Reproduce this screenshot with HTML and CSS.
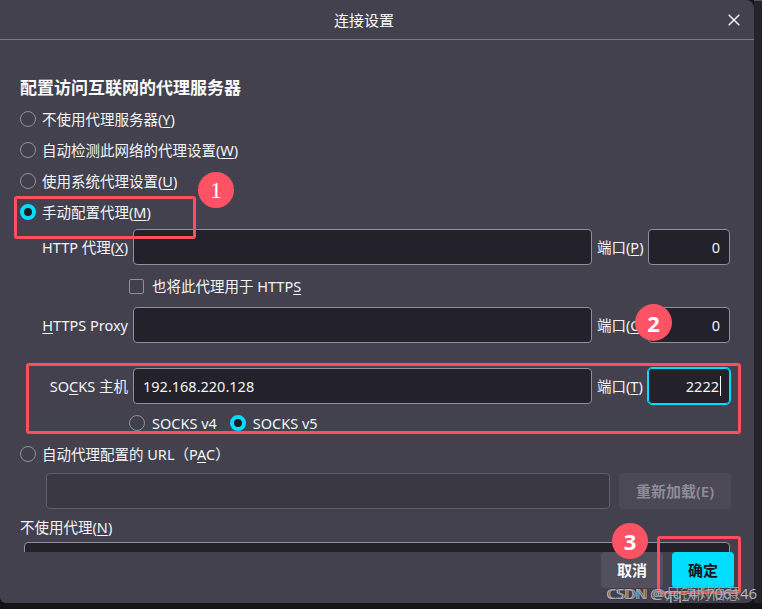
FILE: index.html
```html
<!DOCTYPE html>
<html lang="zh-CN">
<head>
<meta charset="utf-8">
<title>连接设置</title>
<link rel="stylesheet" href="styles.css">
</head>
<body>
<div class="screen">
  <div class="dialog">
    <div class="titlebar">
      <span class="title">连接设置</span>
      <svg class="close" width="12" height="12" viewBox="0 0 12 12"><path d="M0.7 0.7 L11.3 11.3 M11.3 0.7 L0.7 11.3" stroke="#fbfbfe" stroke-width="1.4" fill="none"/></svg>
    </div>
    <div class="content">
      <div class="heading">配置访问互联网的代理服务器</div>
      <div class="radios">
        <div class="row"><span class="radio"></span><span>不使用代理服务器(<u>Y</u>)</span></div>
        <div class="row"><span class="radio"></span><span>自动检测此网络的代理设置(<u>W</u>)</span></div>
        <div class="row"><span class="radio"></span><span>使用系统代理设置(<u>U</u>)</span></div>
        <div class="row"><span class="radio on"></span><span>手动配置代理(<u>M</u>)</span></div>
      </div>
      <div class="prow first">
        <span class="lbl">HTTP 代理(<u>X</u>)</span>
        <div class="field"></div>
        <span class="plbl">端口(<u>P</u>)</span>
        <div class="field port">0</div>
      </div>
      <div class="checkrow"><span class="check"></span><span>也将此代理用于 HTTP<u>S</u></span></div>
      <div class="prow">
        <span class="lbl"><u>H</u>TTPS Proxy</span>
        <div class="field"></div>
        <span class="plbl">端口(<u>O</u>)</span>
        <div class="field port">0</div>
      </div>
      <div class="prow socks">
        <span class="lbl">SO<u>C</u>KS 主机</span>
        <div class="field host">192.168.220.128</div>
        <span class="plbl">端口(<u>T</u>)</span>
        <div class="field port focus">2222<span class="caret"></span></div>
      </div>
      <div class="versions">
        <span class="radio"></span><span class="vtext">SOCKS v4</span>
        <span class="radio on"></span><span>SOCKS v5</span>
      </div>
      <div class="row pac"><span class="radio"></span><span>自动代理配置的 URL（P<u>A</u>C）</span></div>
      <div class="urlrow">
        <div class="field url"></div>
        <div class="btn reload">重新加载(E)</div>
      </div>
      <div class="noproxy">不使用代理(<u>N</u>)</div>
      <div class="textarea"></div>
    </div>
    <div class="footer">
      <div class="btn cancel">取消</div>
      <div class="btn ok">确定</div>
    </div>
  </div>
  <div class="strip"></div>

  <div class="mark box1"></div>
  <div class="mark box2"></div>
  <div class="mark box3"></div>
  <div class="badge b1">1</div>
  <div class="badge b2">2</div>
  <div class="badge b3">3</div>
  <div class="watermark"><span class="wm">CSDN @qq_41706146</span><span class="wm wm2">CSDN @月铁树伯意</span></div>
</div>
</body>
</html>
```

FILE: styles.css
```css
html, body {
  margin: 0;
  padding: 0;
}
body {
  background: #141318;
  font-family: "Noto Sans", "Noto Sans CJK SC", sans-serif;
  font-size: 14.5px;
  color: #f4f4f7;
}
u {
  text-decoration: underline;
  text-underline-offset: 2px;
  text-decoration-thickness: 1px;
}
.screen {
  position: relative;
  width: 762px;
  height: 609px;
  display: flex;
  align-items: flex-start;
  overflow: hidden;
}
.dialog {
  width: 754px;
  height: 603px;
  background: #42414d;
  border-radius: 0 8px 8px 6px;
  display: flex;
  flex-direction: column;
  overflow: hidden;
  flex: none;
}
.strip {
  flex: 1;
  height: 603px;
  background: #25242c;
  box-shadow: inset 0 28px 0 -27px #55545f;
}
.titlebar {
  height: 39px;
  border-bottom: 1px solid #7a7985;
  display: flex;
  align-items: center;
  padding-right: 14px;
  flex: none;
}
.title {
  flex: 1;
  text-align: center;
  font-size: 15px;
  line-height: 20px;
  color: #fbfbfe;
}
.close {
  display: block;
}
.content {
  height: 476px;
  padding: 36px 0 0 20px;
  overflow: hidden;
  flex: none;
}
.heading {
  font-size: 17px;
  font-weight: 600;
  line-height: 24px;
  height: 24px;
  color: #fbfbfe;
}
.radios {
  margin-top: 3px;
}
.row {
  height: 31px;
  display: flex;
  align-items: center;
  gap: 6px;
  line-height: 20px;
}
.radio {
  width: 16px;
  height: 16px;
  box-sizing: border-box;
  border: 1px solid #8f8f9d;
  border-radius: 50%;
  background: #403f4a;
  flex: none;
}
.radio.on {
  border: 4.5px solid #00ddff;
  background: #1c1b22;
}
.prow {
  height: 36px;
  display: flex;
  align-items: center;
  gap: 5px;
  line-height: 20px;
}
.prow.first {
  margin-top: 2px;
}
.prow.socks {
  margin-top: 25px;
}
.lbl {
  width: 108px;
  text-align: right;
  white-space: nowrap;
  flex: none;
}
.plbl {
  width: 46px;
  white-space: nowrap;
  flex: none;
}
.field {
  width: 459px;
  height: 36px;
  box-sizing: border-box;
  background: #23222b;
  border: 1px solid #8f8f9d;
  border-radius: 4px;
  flex: none;
  display: flex;
  align-items: center;
  padding: 0 9px;
  line-height: 20px;
}
.field.port {
  width: 82px;
  justify-content: flex-end;
}
.field.focus {
  border-color: #00ddff;
  outline: 1px solid #00ddff;
  padding-right: 8px;
}
.caret {
  display: inline-block;
  width: 1px;
  height: 20px;
  background: #fbfbfe;
  margin-left: 1px;
}
.checkrow {
  height: 42px;
  display: flex;
  align-items: center;
  gap: 8px;
  padding-left: 109px;
  line-height: 20px;
}
.check {
  width: 15px;
  height: 15px;
  box-sizing: border-box;
  border: 1px solid #8f8f9d;
  border-radius: 2px;
  background: #403f4a;
  flex: none;
}
.versions {
  margin-top: 4px;
  height: 30px;
  display: flex;
  align-items: center;
  padding-left: 109px;
  line-height: 20px;
}
.versions .radio {
  margin-right: 7px;
}
.vtext {
  margin-right: 13px;
}
.row.pac {
  margin-top: 1px;
  height: 30px;
}
.urlrow {
  margin-top: 4px;
  height: 36px;
  display: flex;
  gap: 9px;
  padding-left: 26px;
}
.field.url {
  width: 564px;
  background: #393843;
  border-color: #5f5e6a;
}
.btn {
  height: 36px;
  box-sizing: border-box;
  border-radius: 4px;
  display: flex;
  align-items: center;
  justify-content: center;
  font-weight: 600;
  font-size: 15px;
  line-height: 20px;
  flex: none;
}
.reload {
  width: 112px;
  background: #4a4955;
  color: #8d8c98;
}
.noproxy {
  margin-top: 3px;
  height: 30px;
  line-height: 30px;
}
.textarea {
  margin-left: 4px;
  width: 706px;
  height: 80px;
  box-sizing: border-box;
  background: #23222b;
  border: 1px solid #8f8f9d;
  border-radius: 4px;
}
.footer {
  height: 51px;
  display: flex;
  justify-content: flex-end;
  gap: 9px;
  padding-right: 20px;
  flex: none;
}
.cancel {
  width: 62px;
  background: #51505c;
  color: #fbfbfe;
}
.ok {
  width: 62px;
  background: #00ddff;
  color: #15141a;
}
.mark {
  position: absolute;
  border: 3px solid #ff4f5e;
  border-radius: 3px;
  box-sizing: border-box;
}
.box1 {
  left: 14px;
  top: 196px;
  width: 182px;
  height: 43px;
}
.box2 {
  left: 26px;
  top: 363px;
  width: 715px;
  height: 71px;
}
.box3 {
  left: 657px;
  top: 536px;
  width: 84px;
  height: 58px;
}
.badge {
  position: absolute;
  width: 36px;
  height: 36px;
  border-radius: 50%;
  background: #fd5364;
  color: #ffffff;
  display: flex;
  align-items: center;
  justify-content: center;
  font-size: 22px;
  font-weight: 700;
  line-height: 1;
}
.b1 {
  left: 198px;
  top: 172px;
  font-family: "Liberation Serif", "DejaVu Serif", serif;
  font-weight: 400;
  font-size: 24px;
}
.b2 {
  left: 635px;
  top: 304px;
  width: 37px;
  height: 37px;
}
.b3 {
  left: 612px;
  top: 523px;
}
.watermark {
  position: absolute;
  left: 606px;
  top: 583px;
  width: 156px;
  height: 20px;
}
.wm {
  position: absolute;
  left: 0;
  top: 0;
  white-space: nowrap;
  font-size: 15px;
  line-height: 20px;
  color: rgba(235, 235, 240, 0.75);
  text-shadow: 0 0 1px rgba(0, 0, 0, 0.6);
}
.wm2 {
  left: 2px;
  color: rgba(235, 235, 240, 0.6);
}
```
